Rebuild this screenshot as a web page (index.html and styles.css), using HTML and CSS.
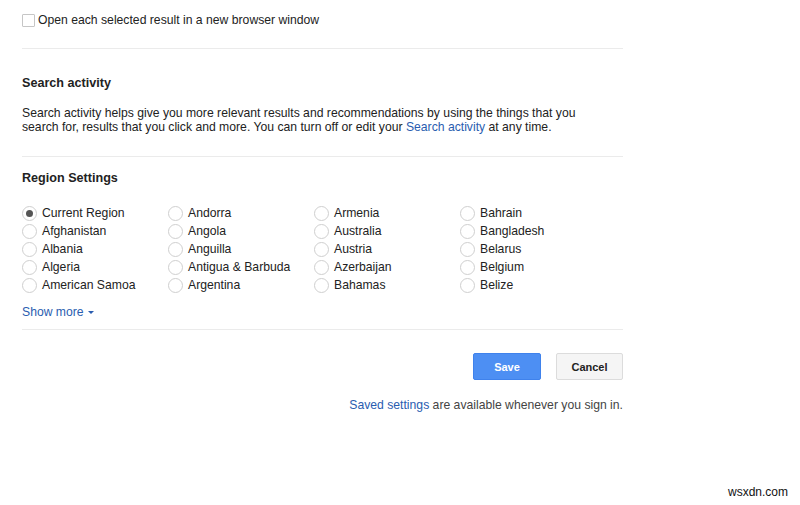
FILE: index.html
```html
<!DOCTYPE html>
<html lang="en">
<head>
    <meta charset="UTF-8">
    <title>Search Settings</title>
    <link rel="stylesheet" href="styles.css">
</head>
<body>
    <div class="settings">
        <label class="check-row">
            <span class="checkbox"></span>
            Open each selected result in a new browser window
        </label>

        <div class="divider divider-top"></div>

        <h2 class="section-title first">Search activity</h2>
        <p class="section-text">
            Search activity helps give you more relevant results and recommendations by using the things that you<br>
            search for, results that you click and more. You can turn off or edit your <a href="#">Search activity</a> at any time.
        </p>

        <div class="divider divider-mid"></div>

        <h2 class="section-title">Region Settings</h2>
        <div class="regions">
            <label class="radio-row"><span class="radio checked"></span>Current Region</label>
            <label class="radio-row"><span class="radio"></span>Afghanistan</label>
            <label class="radio-row"><span class="radio"></span>Albania</label>
            <label class="radio-row"><span class="radio"></span>Algeria</label>
            <label class="radio-row"><span class="radio"></span>American Samoa</label>
            <label class="radio-row"><span class="radio"></span>Andorra</label>
            <label class="radio-row"><span class="radio"></span>Angola</label>
            <label class="radio-row"><span class="radio"></span>Anguilla</label>
            <label class="radio-row"><span class="radio"></span>Antigua &amp; Barbuda</label>
            <label class="radio-row"><span class="radio"></span>Argentina</label>
            <label class="radio-row"><span class="radio"></span>Armenia</label>
            <label class="radio-row"><span class="radio"></span>Australia</label>
            <label class="radio-row"><span class="radio"></span>Austria</label>
            <label class="radio-row"><span class="radio"></span>Azerbaijan</label>
            <label class="radio-row"><span class="radio"></span>Bahamas</label>
            <label class="radio-row"><span class="radio"></span>Bahrain</label>
            <label class="radio-row"><span class="radio"></span>Bangladesh</label>
            <label class="radio-row"><span class="radio"></span>Belarus</label>
            <label class="radio-row"><span class="radio"></span>Belgium</label>
            <label class="radio-row"><span class="radio"></span>Belize</label>
        </div>
        <a href="#" class="show-more">Show more <span class="caret"></span></a>

        <div class="divider divider-bottom"></div>

        <div class="actions">
            <button class="btn btn-save">Save</button>
            <button class="btn btn-cancel">Cancel</button>
        </div>
        <p class="saved-note"><a href="#">Saved settings</a> are available whenever you sign in.</p>
    </div>

    <div class="watermark">wsxdn.com</div>
</body>
</html>
```

FILE: styles.css
```css
body {
    margin: 0;
    font-family: "Liberation Sans", Arial, sans-serif;
    font-size: 12.2px;
    color: #222;
    background: #fff;
}
a {
    color: #2a5db0;
    text-decoration: none;
}
.settings {
    width: 601px;
    margin-left: 22px;
}
.check-row {
    display: flex;
    align-items: center;
    padding-top: 11px;
    line-height: 18px;
}
.checkbox {
    width: 11px;
    height: 11px;
    border: 1px solid #c6c6c6;
    border-radius: 1px;
    margin-right: 3px;
}
.divider {
    border-top: 1px solid #ebebeb;
}
.divider-top {
    margin-top: 19px;
}
.divider-mid {
    margin-top: 22px;
}
.divider-bottom {
    margin-top: 8px;
}
.section-title {
    margin: 12px 0 0;
    font-size: 12.6px;
    font-weight: bold;
    line-height: 18px;
}
.section-title.first {
    margin-top: 25px;
}
.section-text {
    margin: 14px 0 0;
    line-height: 14px;
}
.regions {
    display: grid;
    grid-template-columns: repeat(4, 146px);
    grid-template-rows: repeat(5, 18px);
    grid-auto-flow: column;
    margin-top: 17px;
}
.radio-row {
    display: flex;
    align-items: center;
    line-height: 18px;
    white-space: nowrap;
}
.radio {
    box-sizing: border-box;
    width: 15px;
    height: 15px;
    border: 1px solid #cfcfcf;
    border-radius: 50%;
    margin-right: 5px;
    display: flex;
    align-items: center;
    justify-content: center;
}
.radio.checked::after {
    content: "";
    width: 7px;
    height: 7px;
    border-radius: 50%;
    background: #555;
}
.show-more {
    display: inline-block;
    margin-top: 9px;
    line-height: 18px;
}
.caret {
    display: inline-block;
    width: 0;
    height: 0;
    border-left: 3px solid transparent;
    border-right: 3px solid transparent;
    border-top: 3px solid #2a5db0;
    vertical-align: middle;
    margin-left: 1px;
}
.actions {
    display: flex;
    justify-content: flex-end;
    gap: 15px;
    margin-top: 23px;
}
.btn {
    height: 27px;
    border-radius: 2px;
    font-family: "Liberation Sans", Arial, sans-serif;
    font-size: 11px;
    font-weight: bold;
    cursor: pointer;
}
.btn-save {
    width: 68px;
    background: #4d8ff3;
    border: 1px solid #3f82ec;
    color: #fff;
}
.btn-cancel {
    width: 67px;
    background: #f5f5f5;
    border: 1px solid #dcdcdc;
    color: #222;
}
.saved-note {
    margin: 16px 0 0;
    line-height: 18px;
    text-align: right;
    color: #444;
}
.watermark {
    position: absolute;
    right: 12px;
    bottom: 6px;
    font-family: "Liberation Sans", Arial, sans-serif;
    font-size: 12px;
    color: #111;
}
```
